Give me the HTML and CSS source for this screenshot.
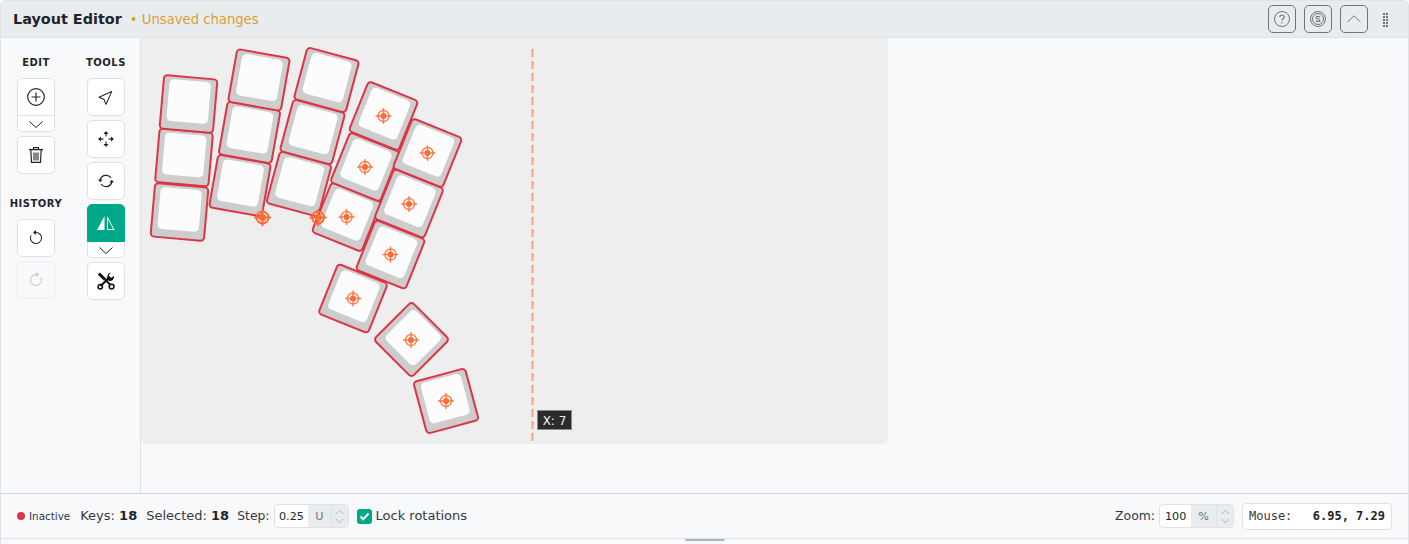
FILE: index.html
```html
<!DOCTYPE html>
<html lang="en">
<head>
<meta charset="utf-8">
<title>Layout Editor</title>
<link rel="stylesheet" href="styles.css">
</head>
<body>
<svg class="defs" width="0" height="0" aria-hidden="true">
  <defs>
    <g id="key">
      <rect x="-26.750" y="-26.750" width="53.500" height="53.500" rx="3.500" fill="#cdcdcd" stroke="#dc3545" stroke-width="2"/>
      <rect x="-20.750" y="-23.500" width="41.500" height="42" rx="4.500" fill="#fcfcfc"/>
    </g>
    <g id="mark" fill="none" stroke="#ff6b35">
      <circle r="5.500" stroke-width="1.400" stroke-opacity=".85"/>
      <path d="M-8 0H8M0-8V8" stroke-width="1.400" stroke-opacity=".85"/>
      <circle r="3" fill="#ff6b35" stroke="none"/>
    </g>
    <g id="origin" fill="none" stroke="#ff6b35">
      <circle r="6" stroke-width="1.800"/>
      <path d="M-8.500 0H8.500M0-8.500V8.500" stroke-width="2"/>
      <circle r="3.500" fill="#ff6b35" stroke="none"/>
    </g>
  </defs>
</svg>
<div class="app">
  <header class="topbar">
    <div class="title-group">
      <h1 class="title">Layout Editor</h1>
      <span class="unsaved">• Unsaved changes</span>
    </div>
    <div class="top-actions">
      <button class="top-btn" type="button" aria-label="Help">
        <svg width="16" height="16" viewBox="0 0 16 16" fill="none" stroke="#6c757d"><circle cx="8" cy="8" r="7.500"/><path d="M5.700 6.100C5.800 4.700 6.800 4 8 4c1.300 0 2.300.8 2.300 2 0 1.800-2.300 1.800-2.300 3.500" stroke-width="1.100"/><circle cx="8" cy="11.700" r=".8" fill="#6c757d" stroke="none"/></svg>
      </button>
      <button class="top-btn" type="button" aria-label="Pricing">
        <svg width="16" height="16" viewBox="0 0 16 16" fill="none" stroke="#6c757d"><circle cx="8" cy="8" r="7.500"/><circle cx="8" cy="8" r="5.500"/><path d="M9.900 6.500C9.700 5.800 9 5.400 8 5.400c-1.100 0-1.900.5-1.900 1.300 0 1.800 3.800.8 3.800 2.600 0 .8-.8 1.300-1.900 1.300-1 0-1.800-.4-2-1.200" stroke-width="1.200"/></svg>
      </button>
      <button class="top-btn" type="button" aria-label="Collapse">
        <svg width="16" height="16" viewBox="0 0 16 16" fill="none" stroke="#6c757d"><path d="M1.500 11 8 4.800 14.500 11"/></svg>
      </button>
      <svg class="grip" width="7" height="15" viewBox="0 0 7 15" fill="#6c757d" aria-hidden="true">
        <path d="M0 1h2v2H0zM3 1h2v2H3zM0 4h2v2H0zM3 4h2v2H3zM0 7h2v2H0zM3 7h2v2H3zM0 10h2v2H0zM3 10h2v2H3zM0 13h2v2H0zM3 13h2v2H3z"/>
      </svg>
    </div>
  </header>

  <div class="workspace">
    <aside class="sidebar">
      <div class="tool-col">
        <div class="tool-label">EDIT</div>
        <div class="btn-split">
          <button class="tool-btn" type="button" aria-label="Add">
            <svg width="18" height="18" viewBox="0 0 16 16" fill="none" stroke="#212529" stroke-width="1.050"><circle cx="8" cy="8" r="7.400"/><path d="M8 4v8M4 8h8"/></svg>
          </button>
          <button class="chev-btn" type="button" aria-label="More">
            <svg width="16" height="10" viewBox="0 0 16 10" fill="none" stroke="#212529"><path d="M1.500 2.500 8 8.500l6.500-6"/></svg>
          </button>
        </div>
        <button class="tool-btn" type="button" aria-label="Delete">
          <svg width="16" height="18" viewBox="0 0 16 18" fill="none" stroke="#212529" stroke-width="1.200"><path d="M1 3.700h14M5.500 3.500V1.600h5v1.900M2.800 3.700l.7 12.700h9l.7-12.700"/><path d="M6 6.500v8M8 6.500v8M10 6.500v8" stroke-width="1.100"/></svg>
        </button>
        <div class="tool-label history-label">HISTORY</div>
        <button class="tool-btn" type="button" aria-label="Undo">
          <svg width="16" height="16" viewBox="0 0 16 16" fill="#212529"><path fill-rule="evenodd" d="M8 3a5 5 0 1 1-4.546 2.914.5.5 0 0 0-.908-.417A6 6 0 1 0 8 2v1z"/><path d="M8 4.466V.534a.25.25 0 0 0-.41-.192L5.230 2.308a.25.25 0 0 0 0 .384l2.360 1.966A.25.25 0 0 0 8 4.466z"/></svg>
        </button>
        <button class="tool-btn disabled" type="button" aria-label="Redo">
          <svg width="16" height="16" viewBox="0 0 16 16" fill="#c6c8ca"><path fill-rule="evenodd" d="M8 3a5 5 0 1 0 4.546 2.914.5.5 0 0 1 .908-.417A6 6 0 1 1 8 2v1z"/><path d="M8 4.466V.534a.25.25 0 0 1 .41-.192l2.360 1.966c.12.100.12.284 0 .384L8.410 4.658A.25.25 0 0 1 8 4.466z"/></svg>
        </button>
      </div>
      <div class="tool-col">
        <div class="tool-label">TOOLS</div>
        <button class="tool-btn" type="button" aria-label="Select">
          <svg width="16" height="16" viewBox="0 0 16 16" fill="#212529"><path d="M14.082 2.182a.5.5 0 0 1 .103.557L8.528 15.467a.5.5 0 0 1-.917-.007L5.570 10.694.803 8.652a.5.5 0 0 1-.006-.916l12.728-5.657a.5.5 0 0 1 .556.103zM2.250 8.184l3.897 1.670a.5.5 0 0 1 .262.263l1.670 3.897L12.743 3.520 2.250 8.184z"/></svg>
        </button>
        <button class="tool-btn" type="button" aria-label="Move">
          <svg width="16" height="16" viewBox="0 0 16 16" fill="#212529"><path d="M8 0l2.600 3H5.400zM8 16l-2.600-3h5.200zM0 8l3-2.600v5.200zM16 8l-3 2.600V5.400z"/><path d="M8 3v2.500M8 10.500V13M3 8h2.500M10.500 8H13" stroke="#495057" stroke-width="1.400" fill="none"/></svg>
        </button>
        <button class="tool-btn" type="button" aria-label="Rotate">
          <svg width="16" height="16" viewBox="0 0 16 16" fill="none" stroke="#212529" stroke-width="1.300"><path d="M2.200 7A6 6 0 0 1 13 5M13.800 9A6 6 0 0 1 3 11"/><path d="M0 6.500h4.500L2.200 9.200zM16 9.500h-4.500l2.300-2.700z" fill="#212529" stroke="none"/></svg>
        </button>
        <div class="btn-split">
          <button class="tool-btn active" type="button" aria-label="Mirror">
            <svg width="20" height="16" viewBox="0 0 20 16"><path d="M8.500 1V15H1z" fill="#fff"/><path d="M11.500 2.500V14.500H18z" fill="none" stroke="#fff"/></svg>
          </button>
          <button class="chev-btn" type="button" aria-label="More">
            <svg width="16" height="10" viewBox="0 0 16 10" fill="none" stroke="#212529"><path d="M1.500 2.500 8 8.500l6.500-6"/></svg>
          </button>
        </div>
        <button class="tool-btn" type="button" aria-label="Tools">
          <svg width="18" height="18" viewBox="0 0 18 18" fill="none" stroke="#111"><path d="M1.800 1.500 8 7.500" stroke-width="3"/><path d="M8 7.500 13.500 13" stroke-width="2"/><path d="M13 5 3.500 14" stroke-width="2.200"/><circle cx="3.300" cy="14.700" r="2.200" stroke-width="1.500"/><circle cx="14.600" cy="14.600" r="2.400" stroke-width="1.500"/><path d="M12.300.9a4 4 0 0 1 1.600-.1L11.800 3l.5 2.300 2.300.5L16.800 3.700a4 4 0 0 1-5 5L9.500 7l1-3a4 4 0 0 1 1.800-3.100z" fill="#111" stroke="none"/></svg>
        </button>
      </div>
    </aside>

    <main class="stage">
      <div class="canvas">
        <svg class="keys" width="747" height="406" viewBox="141 38 747 406" aria-label="Keyboard layout">
          <line x1="532.500" y1="49" x2="532.500" y2="444" stroke="#ffa07a" stroke-width="2" stroke-dasharray="8 4"/>
          <use href="#key" transform="translate(179.500 212) rotate(5)"/>
          <use href="#key" transform="translate(184 157.500) rotate(5)"/>
          <use href="#key" transform="translate(188.500 104) rotate(5)"/>
          <use href="#key" transform="translate(240 185.500) rotate(10)"/>
          <use href="#key" transform="translate(249.500 132.500) rotate(10)"/>
          <use href="#key" transform="translate(259 80) rotate(10)"/>
          <use href="#key" transform="translate(299 184) rotate(15)"/>
          <use href="#key" transform="translate(312.500 132) rotate(15)"/>
          <use href="#key" transform="translate(326.500 80) rotate(15)"/>
          <use href="#key" transform="translate(346.500 217) rotate(22)"/>
          <use href="#key" transform="translate(365 167) rotate(22)"/>
          <use href="#key" transform="translate(383.500 116) rotate(22)"/>
          <use href="#key" transform="translate(390.500 254.500) rotate(22)"/>
          <use href="#key" transform="translate(409 203.500) rotate(22)"/>
          <use href="#key" transform="translate(427.500 153) rotate(22)"/>
          <use href="#key" transform="translate(353 298.500) rotate(22)"/>
          <use href="#key" transform="translate(411.500 339.500) rotate(45)"/>
          <use href="#key" transform="translate(446 401) rotate(-15)"/>
          <use href="#mark" x="383.500" y="116"/>
          <use href="#mark" x="427.500" y="153"/>
          <use href="#mark" x="365" y="167"/>
          <use href="#mark" x="409" y="204"/>
          <use href="#mark" x="346.500" y="217"/>
          <use href="#mark" x="390.500" y="254.500"/>
          <use href="#mark" x="353" y="298.500"/>
          <use href="#mark" x="411" y="340"/>
          <use href="#mark" x="446" y="401"/>
          <use href="#origin" x="262.500" y="217.500"/>
          <use href="#origin" x="318" y="217.500"/>
        </svg>
        <div class="axis-tip">X: 7</div>
      </div>
    </main>
  </div>

  <footer class="statusbar">
    <div class="status-left">
      <span class="state"><i class="dot"></i>Inactive</span>
      <span class="stat">Keys: <b>18</b></span>
      <span class="stat">Selected: <b>18</b></span>
      <span class="stat stat-small">Step:</span>
      <span class="input-group step-input">
        <span class="value">0.25</span><span class="unit">U</span>
        <span class="spin"><svg width="9" height="6" viewBox="0 0 9 6" fill="none" stroke="#adb5bd"><path d="M.8 5 4.500 1.200 8.200 5"/></svg><svg width="9" height="6" viewBox="0 0 9 6" fill="none" stroke="#adb5bd"><path d="M.8 1 4.500 4.800 8.200 1"/></svg></span>
      </span>
      <label class="lock">
        <span class="check"><svg width="11" height="9" viewBox="0 0 11 9" fill="none" stroke="#fff" stroke-width="2"><path d="M1.500 4.500 4.200 7.200 9.500 1.500"/></svg></span>
        <span class="lock-text">Lock rotations</span>
      </label>
    </div>
    <div class="status-right">
      <span class="stat stat-small">Zoom:</span>
      <span class="input-group zoom-input">
        <span class="value">100</span><span class="unit">%</span>
        <span class="spin"><svg width="9" height="6" viewBox="0 0 9 6" fill="none" stroke="#adb5bd"><path d="M.8 5 4.500 1.200 8.200 5"/></svg><svg width="9" height="6" viewBox="0 0 9 6" fill="none" stroke="#adb5bd"><path d="M.8 1 4.500 4.800 8.200 1"/></svg></span>
      </span>
      <div class="mouse"><span>Mouse:</span><b>6.95, 7.29</b></div>
    </div>
  </footer>
  <div class="resize-strip"><span class="resize-handle"></span></div>
</div>
</body>
</html>
```
FILE: styles.css
```css
* { box-sizing: border-box; }
html, body { margin: 0; height: 100%; }
body {
  font-family: "DejaVu Sans", sans-serif;
  color: #212529;
  background: #f8f9fa;
  overflow: hidden;
}
.defs { position: absolute; }
.app {
  height: 544px;
  display: flex;
  flex-direction: column;
  background: #f8f9fa;
  border: 1px solid #dee2e6;
  border-bottom: 0;
  border-radius: 6px 6px 0 0;
  overflow: hidden;
}
.topbar {
  height: 37px;
  flex: none;
  display: flex;
  align-items: center;
  justify-content: space-between;
  padding: 0 18px 0 12px;
  background: #e9ecef;
  border-bottom: 1px solid #dee2e6;
}
.title-group { display: flex; align-items: center; gap: 8px; }
.title { margin: 0; font-size: 14.400px; font-weight: 700; line-height: 1; color: #212529; }
.unsaved { font-size: 13.200px; color: #d9a12e; }
.top-actions { display: flex; align-items: center; gap: 8px; }
.top-btn {
  width: 28px;
  height: 28px;
  padding: 0;
  display: flex;
  align-items: center;
  justify-content: center;
  background: transparent;
  border: 1px solid #6c757d;
  border-radius: 5px;
}
.grip { margin-left: 7px; }

.workspace { flex: 1; min-height: 0; display: flex; }
.sidebar {
  width: 140px;
  flex: none;
  display: grid;
  grid-template-columns: 52px 52px;
  column-gap: 18px;
  padding: 19px 0 0 9px;
  align-content: start;
  border-right: 1px solid #dee2e6;
}
.tool-col { display: flex; flex-direction: column; align-items: center; gap: 4px; }
.tool-label {
  height: 17px;
  margin-bottom: 0;
  font-size: 10px;
  line-height: 12px;
  font-weight: 700;
  letter-spacing: .5px;
  color: #212529;
  white-space: nowrap;
}
.history-label { margin-top: 20px; height: 17px; }
.tool-btn {
  width: 38px;
  height: 38px;
  padding: 0;
  display: flex;
  align-items: center;
  justify-content: center;
  background: #fff;
  border: 1px solid #dee2e6;
  border-radius: 5px;
}
.tool-btn.active { background: #00a88a; border-color: #00a88a; }
.tool-btn.disabled { background: #f8f9fa; border-color: #e9ecef; }
.btn-split { display: flex; flex-direction: column; width: 38px; }
.btn-split .tool-btn { border-radius: 5px 5px 0 0; }
.chev-btn {
  width: 38px;
  height: 16px;
  padding: 0;
  display: flex;
  align-items: center;
  justify-content: center;
  background: #fff;
  border: 1px solid #dee2e6;
  border-top: 0;
  border-radius: 0 0 5px 5px;
}

.stage { flex: 1; min-width: 0; background: #f8f9fa; }
.canvas {
  position: relative;
  width: 747px;
  height: 406px;
  background: #eeeeee;
  border-radius: 0 0 6px 6px;
  overflow: hidden;
}
.keys { display: block; }
.axis-tip {
  position: absolute;
  left: 396px;
  top: 372px;
  width: 35px;
  height: 20px;
  background: #2b2b2b;
  border: 1px solid #8a8a8a;
  color: #f2f2f2;
  font-size: 12px;
  line-height: 20px;
  text-align: center;
}

.statusbar {
  height: 45px;
  flex: none;
  display: flex;
  align-items: center;
  justify-content: space-between;
  padding: 0 16px;
  background: #f8f9fa;
  border-top: 1px solid #ced4da;
  font-size: 13px;
  color: #343a40;
}
.status-left, .status-right { display: flex; align-items: center; }
.state { display: flex; align-items: center; font-size: 10.400px; margin-right: 10px; margin-top: -1px; }
.dot { width: 8px; height: 8px; border-radius: 50%; background: #dc3545; margin: 1px 4px 0 0; }
.stat { margin-top: -2px; }
.stat b { font-weight: 700; color: #212529; }
.stat + .stat { margin-left: 9px; }
.stat + .stat-small { margin-left: 8px; }
.stat-small { font-size: 12.400px; }
.input-group {
  display: flex;
  height: 24px;
  margin-left: 4px;
  background: #fff;
  border: 1px solid #dee2e6;
  border-radius: 4px;
  overflow: hidden;
  font-size: 11.200px;
  line-height: 23px;
}
.value { flex: 1; text-align: center; color: #212529; }
.unit { padding: 0 7px; background: #e9ecef; color: #6c757d; }
.spin {
  width: 17px;
  flex: none;
  display: flex;
  flex-direction: column;
  align-items: center;
  justify-content: space-around;
  background: #e9ecef;
  border-left: 1px solid #dee2e6;
  padding: 2px 0;
}
.spin svg { display: block; }
.step-input { width: 75px; }
.lock { display: flex; align-items: center; margin-left: 8px; color: #343a40; }
.lock-text { margin-top: -2px; }
.check {
  width: 15px;
  height: 15px;
  margin-right: 4px;
  display: flex;
  align-items: center;
  justify-content: center;
  background: #00a88a;
  border-radius: 3px;
}
.zoom-input { width: 75px; }
.mouse {
  width: 150px;
  height: 27px;
  margin-left: 8px;
  padding: 0 6px;
  display: flex;
  align-items: center;
  justify-content: space-between;
  background: #fff;
  border: 1px solid #dee2e6;
  border-radius: 4px;
  font-family: "DejaVu Sans Mono", monospace;
  font-size: 12px;
  color: #343a40;
}
.mouse b { font-weight: 700; color: #212529; }
.resize-strip {
  height: 6px;
  flex: none;
  display: flex;
  justify-content: center;
  background: #f8f9fa;
  border-top: 1px solid #dee2e6;
}
.resize-handle { width: 40px; height: 2px; background: #adb5bd; border-radius: 2px; }
```
